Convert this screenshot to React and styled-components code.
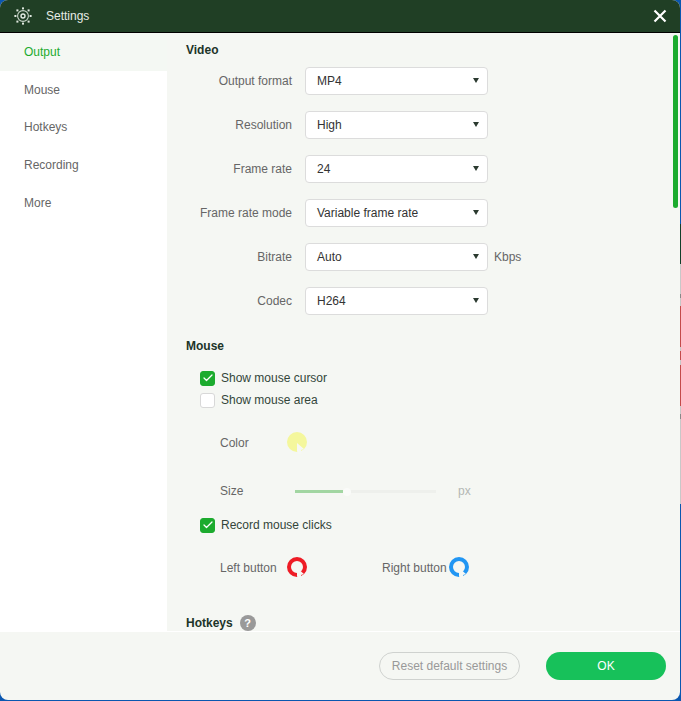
import React from 'react'
import styled, { createGlobalStyle } from 'styled-components'
import { Check } from 'lucide-react'

const GlobalStyle = createGlobalStyle`
  html, body {
    margin: 0;
    padding: 0;
    background: #0a57b0;
    overflow: hidden;
  }
  * { box-sizing: border-box; }
`

const menuItems = ['Output', 'Mouse', 'Hotkeys', 'Recording', 'More']

const videoRows = [
  { label: 'Output format', value: 'MP4' },
  { label: 'Resolution', value: 'High' },
  { label: 'Frame rate', value: '24' },
  { label: 'Frame rate mode', value: 'Variable frame rate' },
  { label: 'Bitrate', value: 'Auto', unit: 'Kbps' },
  { label: 'Codec', value: 'H264' },
]

const GearIcon = () => (
  <svg width="20" height="20" viewBox="0 0 20 20">
    <circle cx="10" cy="10" r="5.4" fill="none" stroke="#c9d6ca" strokeWidth="1.1" />
    <circle cx="10" cy="10" r="2" fill="none" stroke="#e3ebe3" strokeWidth="1.4" />
    <g fill="#dfe8df">
      <rect x="9" y="1.4" width="2" height="2" />
      <rect x="9" y="16.6" width="2" height="2" />
      <rect x="1.4" y="9" width="2" height="2" />
      <rect x="16.6" y="9" width="2" height="2" />
      <rect x="3.4" y="3.4" width="2" height="2" />
      <rect x="14.6" y="3.4" width="2" height="2" />
      <rect x="3.4" y="14.6" width="2" height="2" />
      <rect x="14.6" y="14.6" width="2" height="2" />
    </g>
  </svg>
)

const CloseIcon = () => (
  <svg width="14" height="14" viewBox="0 0 14 14">
    <path d="M1.5 1.5 L12.5 12.5 M12.5 1.5 L1.5 12.5" stroke="#fff" strokeWidth="2.2" />
  </svg>
)

// ring with the little white pointer sitting on its lower edge
const CursorRing = ({ color, filled }) => (
  <svg width="22" height="26" viewBox="0 0 22 26">
    <circle
      cx="11"
      cy="12"
      r={filled ? 10 : 8}
      fill={filled ? color : 'none'}
      stroke={filled ? 'none' : color}
      strokeWidth={filled ? 0 : 4}
    />
    <path d="M11 13 L18 19 L15 20 L16 24 L12 24 L11 21 Z" fill="#f6f8f4" />
  </svg>
)

const App = () => {
  return (
    <>
      <GlobalStyle />
      <Desktop>
        <Edge />
        <Window>
          <TitleBar>
            <TitleLeft>
              <GearIcon />
              <Title>Settings</Title>
            </TitleLeft>
            <CloseIcon />
          </TitleBar>

          <Body>
            <Sidebar>
              {menuItems.map((item, i) => (
                <MenuItem key={item} $active={i === 0}>{item}</MenuItem>
              ))}
            </Sidebar>

            <Content>
              <SectionTitle>Video</SectionTitle>
              <FormRows>
                {videoRows.map((row) => (
                  <FormRow key={row.label}>
                    <FormLabel>{row.label}</FormLabel>
                    <Select>
                      {row.value}
                      <Caret />
                    </Select>
                    {row.unit && <Unit>{row.unit}</Unit>}
                  </FormRow>
                ))}
              </FormRows>

              <MouseTitle>Mouse</MouseTitle>
              <CheckRow>
                <Checkbox $checked><Check size={12} strokeWidth={2.5} /></Checkbox>
                <CheckLabel>Show mouse cursor</CheckLabel>
              </CheckRow>
              <CheckRow $gap>
                <Checkbox />
                <CheckLabel>Show mouse area</CheckLabel>
              </CheckRow>

              <ColorRow>
                <MouseLabel $width={66}>Color</MouseLabel>
                <CursorRing color="#f4f79c" filled />
              </ColorRow>

              <SizeRow>
                <MouseLabel $width={75}>Size</MouseLabel>
                <Slider>
                  <SliderFill />
                  <SliderThumb />
                </Slider>
                <PxLabel>px</PxLabel>
              </SizeRow>

              <CheckRow $top>
                <Checkbox $checked><Check size={12} strokeWidth={2.5} /></Checkbox>
                <CheckLabel>Record mouse clicks</CheckLabel>
              </CheckRow>

              <ButtonsRow>
                <ButtonGroup>
                  <MouseLabel $after={9}>Left button</MouseLabel>
                  <CursorRing color="#ee1c25" />
                </ButtonGroup>
                <ButtonGroup $right>
                  <MouseLabel $after={1}>Right button</MouseLabel>
                  <CursorRing color="#2196f3" />
                </ButtonGroup>
              </ButtonsRow>

              <HotkeysTitle>
                Hotkeys
                <Help>?</Help>
              </HotkeysTitle>

              <ScrollThumb />
            </Content>
          </Body>

          <Footer>
            <ResetButton>Reset default settings</ResetButton>
            <OkButton>OK</OkButton>
          </Footer>
        </Window>
      </Desktop>
    </>
  )
}

export default App

const Desktop = styled.div`
  position: relative;
  width: 681px;
  height: 701px;
  overflow: hidden;
  background: #0a57b0;
  font-family: "Liberation Sans", Arial, sans-serif;
`
const Edge = styled.div`
  position: absolute;
  top: 0;
  right: 0;
  width: 1px;
  height: 504px;
  background: linear-gradient(
    to bottom,
    #0a57b0 0 224px, #12402a 224px 264px, #c8c8c8 264px 294px, #888 294px 298px,
    #c8c8c8 298px 306px, #c44a4a 306px 347px, #c8c8c8 347px 351px, #c44a4a 351px 360px,
    #c8c8c8 360px 365px, #c44a4a 365px 406px, #c8c8c8 406px 414px, #888 414px 419px,
    #c8c8c8 419px 504px
  );
`
const Window = styled.div`
  width: 680px;
  height: 700px;
  display: flex;
  flex-direction: column;
  border-radius: 8px;
  overflow: hidden;
  background: #f5f7f3;
`
const TitleBar = styled.div`
  height: 33px;
  flex-shrink: 0;
  display: flex;
  align-items: center;
  justify-content: space-between;
  padding: 0 13px 1px 13px;
  background: #203f25;
  border-bottom: 1px solid #000;
`
const TitleLeft = styled.div`
  display: flex;
  align-items: center;
  gap: 13px;
`
const Title = styled.span`
  font-size: 12px;
  color: #e6ece6;
`
const Body = styled.div`
  flex: 1;
  min-height: 0;
  display: flex;
  border-bottom: 1px solid #fff;
`
const Sidebar = styled.div`
  width: 167px;
  flex-shrink: 0;
  background: #fff;
`
const MenuItem = styled.div`
  height: 37.7px;
  padding-left: 24px;
  display: flex;
  align-items: center;
  font-size: 12px;
  color: ${(p) => (p.$active ? '#1cab2e' : '#666')};
  background: ${(p) => (p.$active ? '#f4f8f3' : '#fff')};
`
const Content = styled.div`
  position: relative;
  flex: 1;
  min-width: 0;
  overflow: hidden;
  padding-top: 10px;
`
const SectionTitle = styled.div`
  height: 14px;
  margin-left: 19px;
  font-size: 12px;
  line-height: 14px;
  font-weight: bold;
  color: #203428;
`
const FormRows = styled.div`
  display: flex;
  flex-direction: column;
  gap: 16px;
  margin-top: 10px;
`
const FormRow = styled.div`
  display: flex;
  align-items: center;
  height: 28px;
`
const FormLabel = styled.div`
  width: 125px;
  margin-right: 13px;
  text-align: right;
  font-size: 12px;
  color: #666;
`
const Select = styled.div`
  position: relative;
  width: 183px;
  height: 28px;
  padding-left: 11px;
  display: flex;
  align-items: center;
  font-size: 12px;
  color: #333;
  background: #fff;
  border: 1px solid #dcdcdc;
  border-radius: 4px;
`
const Caret = styled.span`
  position: absolute;
  right: 8px;
  top: 10px;
  width: 0;
  height: 0;
  border-left: 3.5px solid transparent;
  border-right: 3.5px solid transparent;
  border-top: 5px solid #2b3a30;
`
const Unit = styled.span`
  margin-left: 6px;
  font-size: 12px;
  color: #666;
`
const MouseTitle = styled(SectionTitle)`
  margin-top: 24px;
  margin-bottom: 17px;
`
const CheckRow = styled.div`
  display: flex;
  align-items: center;
  gap: 6px;
  height: 16px;
  margin-left: 33px;
  margin-top: ${(p) => (p.$gap ? '6px' : p.$top ? '18px' : '0')};
`
const Checkbox = styled.span`
  width: 15px;
  height: 15px;
  display: flex;
  align-items: center;
  justify-content: center;
  border-radius: 3px;
  background: ${(p) => (p.$checked ? '#1cab2e' : '#fff')};
  border: 1px solid ${(p) => (p.$checked ? '#1cab2e' : '#d8d8d8')};
  color: #fff;
`
const CheckLabel = styled.span`
  font-size: 12px;
  color: #33453a;
`
const ColorRow = styled.div`
  display: flex;
  align-items: center;
  height: 26px;
  margin-top: 22px;
  margin-left: 53px;
`
const SizeRow = styled.div`
  display: flex;
  align-items: center;
  height: 16px;
  margin-top: 27px;
  margin-left: 53px;
`
const MouseLabel = styled.div`
  width: ${(p) => (p.$width ? `${p.$width}px` : 'auto')};
  margin-right: ${(p) => p.$after || 0}px;
  font-size: 12px;
  color: #666;
`
const Slider = styled.div`
  position: relative;
  width: 141px;
  height: 3px;
  background: #eef0ec;
`
const SliderFill = styled.div`
  width: 48px;
  height: 100%;
  background: #a2d6a2;
`
const SliderThumb = styled.span`
  position: absolute;
  left: 48px;
  top: -2px;
  width: 8px;
  height: 8px;
  border-radius: 50%;
  background: #fafbf9;
`
const PxLabel = styled.span`
  margin-left: 22px;
  font-size: 12px;
  color: #b4b8b4;
`
const ButtonsRow = styled.div`
  display: flex;
  align-items: center;
  height: 26px;
  margin-top: 22px;
  margin-left: 53px;
`
const ButtonGroup = styled.div`
  display: flex;
  align-items: center;
  width: ${(p) => (p.$right ? 'auto' : '162px')};
`
const HotkeysTitle = styled(SectionTitle)`
  display: flex;
  align-items: center;
  gap: 7px;
  margin-top: 35px;
`
const Help = styled.span`
  width: 16px;
  height: 16px;
  flex-shrink: 0;
  border-radius: 50%;
  background: #999;
  color: #fff;
  font-size: 11px;
  line-height: 16px;
  text-align: center;
`
const ScrollThumb = styled.div`
  position: absolute;
  top: 2px;
  right: 2px;
  width: 5px;
  height: 173px;
  border-radius: 3px;
  background: #1cab2e;
`
const Footer = styled.div`
  height: 68px;
  flex-shrink: 0;
  display: flex;
  justify-content: flex-end;
  gap: 26px;
  padding: 20px 14px 0 0;
`
const ResetButton = styled.div`
  width: 141px;
  height: 28px;
  display: flex;
  align-items: center;
  justify-content: center;
  font-size: 12px;
  color: #999;
  border: 1px solid #cfd2cf;
  border-radius: 14px;
`
const OkButton = styled.div`
  width: 120px;
  height: 28px;
  display: flex;
  align-items: center;
  justify-content: center;
  font-size: 12px;
  color: #fff;
  background: #17c15a;
  border-radius: 14px;
`
